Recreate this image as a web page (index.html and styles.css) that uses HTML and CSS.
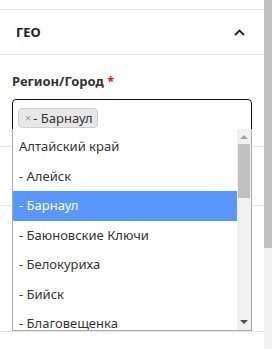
FILE: index.html
```html
<!DOCTYPE html>
<html lang="ru">
<head>
    <meta charset="UTF-8">
    <meta name="viewport" content="width=device-width, initial-scale=1.0">
    <title>Гео</title>
    <link rel="stylesheet" href="styles.css">
</head>
<body>
    <div class="page">
        <div class="top-gap"></div>

        <!-- Geo section -->
        <section class="panel">
            <div class="panel-head">
                <h2>ГЕО</h2>
                <svg class="chevron" width="11" height="7" viewBox="0 0 11 7">
                    <path d="M1 6 L5.5 1.5 L10 6" fill="none" stroke="#222" stroke-width="1.8"/>
                </svg>
            </div>
            <div class="panel-body">
                <label class="field-label">Регион/Город <span class="req">*</span></label>
                <div class="select">
                    <div class="selection">
                        <span class="tag"><span class="tag-x">×</span>- Барнаул</span>
                    </div>

                    <div class="dropdown">
                        <ul class="options">
                            <li>Алтайский край</li>
                            <li>- Алейск</li>
                            <li class="active">- Барнаул</li>
                            <li>- Баюновские Ключи</li>
                            <li>- Белокуриха</li>
                            <li>- Бийск</li>
                            <li>- Благовещенка</li>
                        </ul>
                        <div class="list-scroll">
                            <span class="arrow up"></span>
                            <span class="thumb"></span>
                            <span class="arrow down"></span>
                        </div>
                    </div>
                </div>
            </div>
        </section>

        <div class="row row-a"></div>
        <div class="row row-b"></div>
        <div class="row row-c"></div>
    </div>

    <div class="page-scroll"><span class="page-thumb"></span></div>
</body>
</html>
```

FILE: styles.css
```css
body { margin: 0; display: flex; height: 349px; overflow: hidden; background: #fff; font-family: "Noto Sans", sans-serif; color: #333; }
.page { flex: 1; }
.top-gap { height: 9px; border-bottom: 1px solid #e6e6e6; }

/* Panel */
.panel-head { height: 44px; display: flex; align-items: center; justify-content: space-between; padding: 0 19px 0 16px; border-bottom: 1px solid #e6e6e6; }
.panel-head h2 { margin: 0; font-size: 13px; font-weight: 700; color: #222; }
.panel-body { padding: 17px 12px 0; }
.field-label { display: block; font-size: 13px; font-weight: 700; color: #333; line-height: 18px; }
.req { color: #e02020; }

/* Select */
.select { position: relative; margin-top: 9px; }
.selection { height: 24px; padding: 5px 5px 0; border: 1px solid #111; border-radius: 4px 4px 0 0; }
.tag { display: inline-flex; align-items: center; height: 18px; padding: 0 4px 0 6px; background: #e8e8e8; border: 1px solid #cfcfcf; border-radius: 4px; font-size: 13px; color: #333; }
.tag-x { color: #999; font-size: 11px; margin-right: 2px; }

.dropdown { position: absolute; top: 30px; left: 0; right: 0; height: 201px; display: flex; background: #fff; border: 1px solid #aaa; border-top: 0; overflow: hidden; z-index: 2; }
.options { flex: 1; list-style: none; margin: 0; padding: 3px 0 0; }
.options li { height: 29.5px; line-height: 29.5px; padding-left: 6px; font-size: 13px; color: #333; white-space: nowrap; }
.options li.active { background: #5897fb; color: #fff; }

.list-scroll { width: 14px; background: #f1f1f1; display: flex; flex-direction: column; align-items: center; }
.arrow { width: 0; height: 0; border-left: 4px solid transparent; border-right: 4px solid transparent; }
.arrow.up { border-bottom: 4px solid #a3a3a3; margin: 6px 0 5px; }
.arrow.down { border-top: 4px solid #505050; margin: auto 0 6px; }
.thumb { width: 12px; height: 54px; background: #c1c1c1; }

/* Rows behind the dropdown */
.row { border-bottom: 1px solid #e6e6e6; }
.row-a { height: 16px; }
.row-b { height: 58px; }
.row-c { height: 125px; }

/* Page scrollbar */
.page-scroll { width: 8px; background: #f1f1f1; }
.page-thumb { display: block; height: 248px; background: #c1c1c1; }
```
